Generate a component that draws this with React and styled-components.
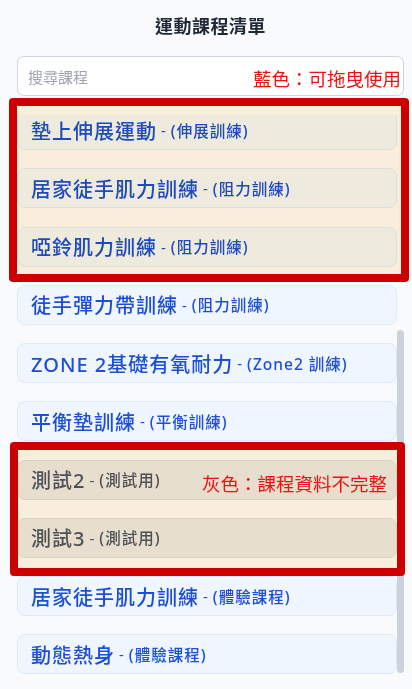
import React from "react";
import styled, { createGlobalStyle } from "styled-components";

const Global = createGlobalStyle`
  html, body { margin: 0; padding: 0; background: #f8fafc; }
  body { font-family: "Noto Sans", "Noto Sans CJK TC", sans-serif; }
  * { box-sizing: border-box; }
`;

const Page = styled.div`
  position: relative;
  height: 689px;
  overflow: hidden;
  padding: 14px 8px 0 17px;
  display: flex;
  flex-direction: column;
`;

const Title = styled.h1`
  margin: 0;
  font-size: 18px;
  line-height: 24px;
  font-weight: 700;
  color: #1f2937;
  text-align: center;
  letter-spacing: 0.5px;
`;

const Search = styled.div`
  margin-top: 18px;
  height: 40px;
  border: 1px solid #cfd5de;
  border-radius: 7px;
  background: #fff;
  display: flex;
  align-items: center;
  padding: 0 10px;
  font-size: 15px;
  color: #9ca3af;
`;

const Viewport = styled.div`
  margin-top: 19px;
  height: 560px;
  overflow: hidden;
  display: flex;
`;

const List = styled.div`
  flex: 1;
  margin-top: -5px;
  display: flex;
  flex-direction: column;
  gap: 18.25px;
`;

const Item = styled.div`
  height: 40px;
  flex: none;
  display: flex;
  align-items: center;
  padding: 0 13px;
  border-radius: 8px;
  border: 1px solid ${(p) => (p.$gray ? "#dcdde1" : "#dbeafe")};
  background: ${(p) => (p.$gray ? "#e8e9ec" : "#eff6ff")};
  color: ${(p) => (p.$gray ? "#4b5563" : "#1d4ed8")};
  white-space: nowrap;
`;

const Name = styled.span`
  font-size: 20px;
  font-weight: 500;
  letter-spacing: 1px;
`;

const Sep = styled.span`
  font-size: 15px;
  margin: 0 5px 0 4px;
`;

const Category = styled.span`
  font-size: 15.5px;
  font-weight: 500;
  letter-spacing: 1px;
`;

const Track = styled.div`
  width: 7px;
  flex: none;
`;

const Thumb = styled.div`
  margin-top: 215px;
  height: 343px;
  border-radius: 4px;
  background: #cbd2dc;
`;

const Box = styled.div`
  position: absolute;
  border: 8px solid #cc0000;
  border-radius: 4px;
  pointer-events: none;
  &::before {
    content: "";
    position: absolute;
    inset: 0;
    background: rgb(255, 243, 222);
    mix-blend-mode: multiply;
  }
`;

const Note = styled.div`
  position: absolute;
  font-family: "Noto Sans CJK TC", sans-serif;
  font-size: 18.5px;
  line-height: 24px;
  color: #ee1111;
  white-space: nowrap;
`;

const courses = [
  { name: "墊上伸展運動", cat: "伸展訓練" },
  { name: "居家徒手肌力訓練", cat: "阻力訓練" },
  { name: "啞鈴肌力訓練", cat: "阻力訓練" },
  { name: "徒手彈力帶訓練", cat: "阻力訓練" },
  { name: "ZONE 2基礎有氧耐力", cat: "Zone2 訓練" },
  { name: "平衡墊訓練", cat: "平衡訓練" },
  { name: "測試2", cat: "測試用", gray: true },
  { name: "測試3", cat: "測試用", gray: true },
  { name: "居家徒手肌力訓練", cat: "體驗課程" },
  { name: "動態熱身", cat: "體驗課程" },
];

export default function App() {
  return (
    <>
      <Global />
      <Page>
        <Title>運動課程清單</Title>
        <Search>搜尋課程</Search>
        <Viewport>
          <List>
            {courses.map((c, i) => (
              <Item key={i} $gray={c.gray}>
                <Name>{c.name}</Name>
                <Sep>-</Sep>
                <Category>({c.cat})</Category>
              </Item>
            ))}
          </List>
          <Track>
            <Thumb />
          </Track>
        </Viewport>
        <Box style={{ left: 9, top: 98, width: 400, height: 184 }} />
        <Box style={{ left: 10, top: 442, width: 395, height: 134 }} />
        <Note style={{ left: 253, top: 66 }}>藍色：可拖曳使用</Note>
        <Note style={{ left: 202, top: 471 }}>灰色：課程資料不完整</Note>
      </Page>
    </>
  );
}
